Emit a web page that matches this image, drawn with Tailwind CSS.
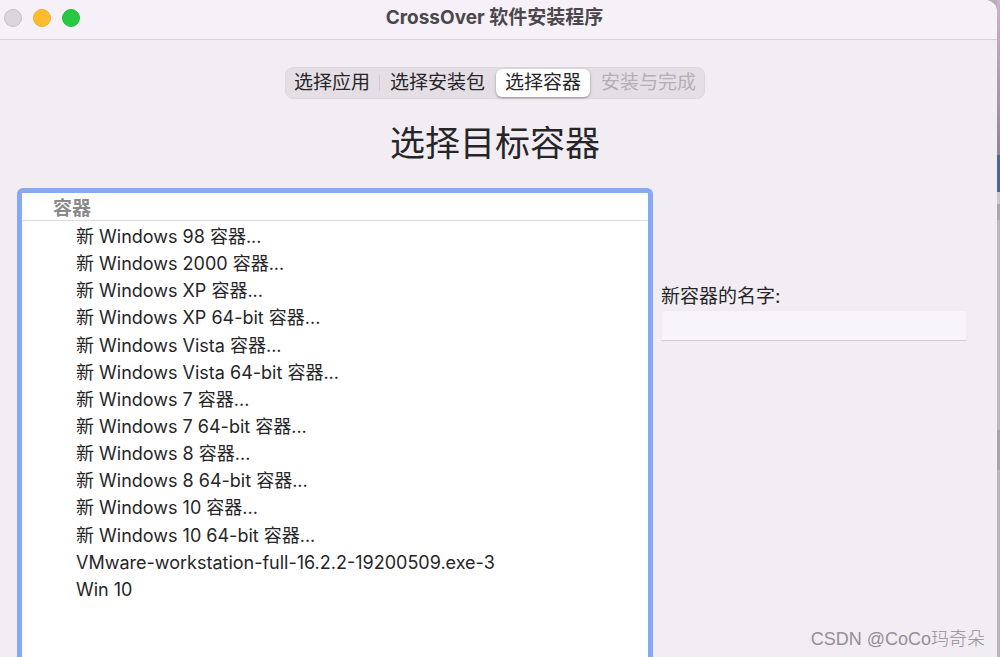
<!DOCTYPE html>
<html lang="zh-CN">
<head>
<meta charset="utf-8">
<meta name="viewport" content="width=device-width, initial-scale=1">
<title>CrossOver 软件安装程序</title>
<script src="https://cdn.jsdelivr.net/npm/@tailwindcss/browser@4"></script>
</head>
<body class="flex h-screen overflow-hidden bg-[#b9abb9] font-['Inter','Noto_Sans_CJK_SC',sans-serif] text-lg text-[#262528]">
<main class="relative flex min-w-0 flex-1 flex-col overflow-hidden rounded-tr-xl bg-[#f2edf3]">
  <header class="grid h-10 shrink-0 grid-cols-[1fr_auto_1fr] items-center border-b border-[#d8d2d7] bg-[#f6f1f8] pr-3 pb-1 pl-1">
    <div class="flex gap-[11px]">
      <button aria-label="关闭" class="size-[18px] rounded-full border border-[#c6c1c7] bg-[#dad6dc]"></button>
      <button aria-label="最小化" class="size-[18px] rounded-full border border-[#f0ae2c] bg-[#febc2e]"></button>
      <button aria-label="缩放" class="size-[18px] rounded-full border border-[#25bd3b] bg-[#28c840]"></button>
    </div>
    <h1 class="text-[19px] leading-7 font-bold text-[#4b484d]">CrossOver 软件安装程序</h1>
  </header>

  <div class="flex shrink-0 flex-col items-center pt-[27px] pr-[7px]">
    <nav aria-label="安装步骤" class="flex h-8 items-center rounded-lg border border-[#dcd7dd] bg-[#e4dfe5] text-[19px] leading-7">
      <button class="px-2">选择应用</button>
      <span class="mx-px h-4 w-px bg-[#cfcad0]"></span>
      <button class="pr-2 pl-[9px]">选择安装包</button>
      <button aria-current="step" class="ml-[3px] h-7 rounded-md bg-white px-[9px] shadow-sm shadow-black/30">选择容器</button>
      <button disabled class="pr-2 pl-[11px] text-[#b3afb5]">安装与完成</button>
    </nav>
    <h2 class="mt-5 text-[35px] leading-[48px]">选择目标容器</h2>
  </div>

  <div class="mt-[21px] grid min-h-0 flex-1 grid-cols-[636fr_306fr] gap-2 pr-[30px] pl-[17px]">
    <section class="rounded-t-md border-x-[5px] border-t-[5px] border-[#86aaef] bg-white">
      <h3 class="h-7 border-b border-[#dcdcdc] pl-[31px] text-[19px] leading-8 font-bold text-[#8a8a8a]">容器</h3>
      <ul class="grid h-[382px] auto-rows-fr pt-0.5 pl-[54px] leading-[27px] whitespace-nowrap">
        <li>新 Windows 98 容器...</li>
        <li>新 Windows 2000 容器...</li>
        <li>新 Windows XP 容器...</li>
        <li>新 Windows XP 64-bit 容器...</li>
        <li>新 Windows Vista 容器...</li>
        <li>新 Windows Vista 64-bit 容器...</li>
        <li>新 Windows 7 容器...</li>
        <li>新 Windows 7 64-bit 容器...</li>
        <li>新 Windows 8 容器...</li>
        <li>新 Windows 8 64-bit 容器...</li>
        <li>新 Windows 10 容器...</li>
        <li>新 Windows 10 64-bit 容器...</li>
        <li>VMware-workstation-full-16.2.2-19200509.exe-3</li>
        <li>Win 10</li>
      </ul>
    </section>
    <form class="pt-[95px]">
      <label for="name" class="block text-[19px] leading-[27px]">新容器的名字:</label>
      <input id="name" type="text" class="block h-[31px] w-full border border-x-[#f0ecf1] border-t-[#eeeaef] border-b-[#d3cfd4] bg-[#f7f5f9] px-2 outline-none">
    </form>
  </div>
</main>
<aside aria-hidden="true" class="flex w-[3px] shrink-0 flex-col">
  <div class="h-[155px] bg-linear-to-b from-[#cdb3cd] to-[#95839a]"></div>
  <div class="h-[37px] bg-[#4268a8]"></div>
  <div class="h-3 bg-[#cbc8cc]"></div>
  <div class="h-4 bg-[#aaa6ab]"></div>
  <div class="h-[210px] bg-[#bbb7bc]"></div>
  <div class="h-10 bg-[#a8a4a9]"></div>
  <div class="flex-1 bg-[#bbb5bb]"></div>
</aside>
<p class="absolute right-[15px] bottom-1 font-['Liberation_Sans','Noto_Sans_CJK_SC',sans-serif] text-lg leading-7 font-light text-[#929094]">CSDN @CoCo玛奇朵</p>
</body>
</html>
